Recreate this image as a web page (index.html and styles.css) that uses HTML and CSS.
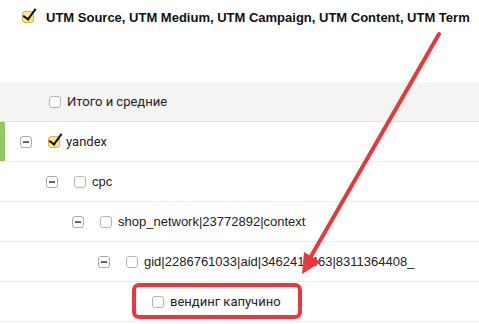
FILE: index.html
```html
<!DOCTYPE html>
<html lang="ru">
<head>
  <meta charset="UTF-8" />
  <title>Группировки</title>
  <link rel="stylesheet" href="styles.css">
</head>
<body>
  <div class="page">
    <div class="title">
      <span class="check checked"></span>
      <span class="title-text">UTM Source, UTM Medium, UTM Campaign, UTM Content, UTM Term</span>
    </div>

    <div class="tree">
      <div class="row total">
        <span class="check"></span>
        <span class="label alt">Итого и средние</span>
      </div>
      <div class="row active lvl-0">
        <span class="toggle"></span>
        <span class="check checked"></span>
        <span class="label alt">yandex</span>
      </div>
      <div class="row lvl-1">
        <span class="toggle"></span>
        <span class="check"></span>
        <span class="label">cpc</span>
      </div>
      <div class="row lvl-2">
        <span class="toggle"></span>
        <span class="check"></span>
        <span class="label">shop_network|23772892|context</span>
      </div>
      <div class="row lvl-3">
        <span class="toggle"></span>
        <span class="check"></span>
        <span class="label">gid|2286761033|aid|3462411463|8311364408_</span>
      </div>
      <div class="row lvl-4">
        <span class="toggle leaf"></span>
        <span class="check"></span>
        <span class="label alt">вендинг капучино</span>
      </div>
    </div>

    <svg class="annotation" width="479" height="324" viewBox="0 0 479 324">
      <rect x="134" y="285" width="166" height="32" rx="5" fill="none" stroke="#e8383b" stroke-width="4"/>
      <line x1="439" y1="34" x2="310" y2="258" stroke="#e8383b" stroke-width="4" stroke-linecap="round"/>
      <polygon points="302,274 304,252 321,262" fill="#e8383b"/>
    </svg>
  </div>
</body>
</html>
```

FILE: styles.css
```css
* {
  box-sizing: border-box;
}

body {
  margin: 0;
  background: #fff;
  color: #222;
  font-family: 'Liberation Sans', Arial, sans-serif;
  font-size: 13px;
}

.page {
  position: relative;
  width: 479px;
  height: 324px;
  overflow: hidden;
}

.title {
  display: flex;
  align-items: center;
  height: 33px;
  padding-left: 22px;
  padding-top: 1px;
}

.title .check {
  margin-right: 12px;
}

.title-text {
  font-weight: bold;
  color: #111;
}

.tree {
  margin-top: 49px;
}

.row {
  display: flex;
  align-items: center;
  height: 40px;
  border-bottom: 1px solid #ebebeb;
}

.row.total {
  background: #f5f4f2;
  border-bottom-color: #e6e4e1;
  padding-left: 49px;
}

.row.active {
  box-shadow: inset 5px 0 #90c964;
}

.lvl-0 { padding-left: 20px; }
.lvl-1 { padding-left: 46px; }
.lvl-2 { padding-left: 72px; }
.lvl-3 { padding-left: 98px; }
.lvl-4 { padding-left: 124px; }

.toggle {
  position: relative;
  width: 12px;
  height: 12px;
  margin-right: 16px;
  border: 1px solid #a9a9a9;
  border-radius: 3px;
  flex: none;
}

.toggle::after {
  content: '';
  position: absolute;
  left: 2px;
  right: 2px;
  top: 4px;
  height: 2px;
  background: #666;
}

.toggle.leaf {
  visibility: hidden;
}

.check {
  position: relative;
  width: 12px;
  height: 12px;
  margin-right: 6px;
  border: 1px solid #b5b5b5;
  border-radius: 3px;
  background: #fff;
  flex: none;
}

.check.checked {
  background: #fde58f;
  border-color: #cfb35a;
}

.check.checked::after {
  content: '';
  position: absolute;
  left: 3px;
  top: -6px;
  width: 5px;
  height: 12px;
  border-right: 2px solid #111;
  border-bottom: 2px solid #111;
  transform: rotate(36deg);
}

.label {
  color: #222;
  white-space: nowrap;
}

.label.alt {
  font-family: Roboto, 'Liberation Sans', sans-serif;
}

.annotation {
  position: absolute;
  left: 0;
  top: 0;
  pointer-events: none;
}
```
